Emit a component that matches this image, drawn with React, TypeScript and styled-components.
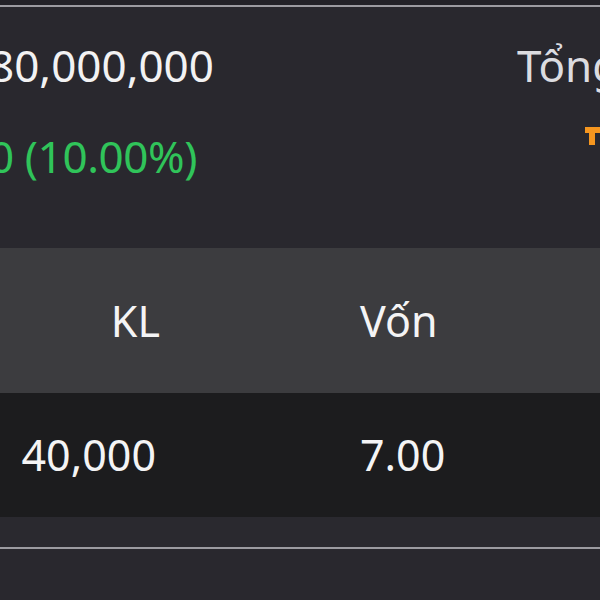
import * as React from 'react';
import styled, { createGlobalStyle } from 'styled-components';

const GlobalStyle = createGlobalStyle`
  html, body {
    margin: 0;
    padding: 0;
    background: #29282e;
  }
  body {
    font-family: "Noto Sans", "Open Sans", sans-serif;
  }
`

const Screen = styled.div`
  width: 600px;
  height: 600px;
  overflow: hidden;
  background: #29282e;
  display: flex;
  flex-direction: column;
`

const TopEdge = styled.div`
  height: 5px;
  background: #232228;
`

const Divider = styled.div`
  height: 2px;
  background: #9c9ba1;
`

const Summary = styled.div`
  display: flex;
  justify-content: space-between;
  padding: 28px 0 62px;
`

const SummaryLeft = styled.div`
  display: flex;
  flex-direction: column;
  gap: 31px;
  margin-left: -11px;
`

const SummaryRight = styled.div`
  width: 83px;
  display: flex;
  flex-direction: column;
`

const BigText = styled.div<{ $color: string; $tight?: boolean }>`
  font-size: 44px;
  line-height: 60px;
  color: ${p => p.$color};
  letter-spacing: ${p => (p.$tight ? '-0.4px' : 'normal')};
  white-space: nowrap;
`

const Marker = styled.svg`
  margin: 32px 0 0 68px;
  display: block;
`

const Row = styled.div<{ $bg: string; $height: number }>`
  display: grid;
  grid-template-columns: 160px 1fr;
  column-gap: 200px;
  align-items: center;
  height: ${p => p.$height}px;
  background: ${p => p.$bg};
`

const Cell = styled.div<{ $align?: string; $pad?: number }>`
  font-size: 43px;
  line-height: 60px;
  color: #f4f4f5;
  text-align: ${p => p.$align || 'left'};
  padding-right: ${p => p.$pad || 0}px;
  white-space: nowrap;
`

const Gap = styled.div`
  height: 30px;
  background: #2a292f;
`

const Rest = styled.div`
  flex: 1;
  background: #29282e;
`

export default function App() {
  return (
    <>
      <GlobalStyle />
      <Screen>
        <TopEdge />
        <Divider />
        <Summary>
          <SummaryLeft>
            <BigText $color="#f2f2f3">80,000,000</BigText>
            <BigText $color="#30c45a" $tight>0 (10.00%)</BigText>
          </SummaryLeft>
          <SummaryRight>
            <BigText $color="#dcdce0">Tổng</BigText>
            <Marker width="16" height="18" viewBox="0 0 16 18">
              <path d="M0 0h16v6h-6v12h-6v-12h-4z" fill="#f5961f" />
            </Marker>
          </SummaryRight>
        </Summary>
        <Row $bg="#3c3c3f" $height={145}>
          <Cell $align="right">KL</Cell>
          <Cell>Vốn</Cell>
        </Row>
        <Row $bg="#1c1c1e" $height={124}>
          <Cell $align="right" $pad={4}>40,000</Cell>
          <Cell>7.00</Cell>
        </Row>
        <Gap />
        <Divider />
        <Rest />
      </Screen>
    </>
  );
}
